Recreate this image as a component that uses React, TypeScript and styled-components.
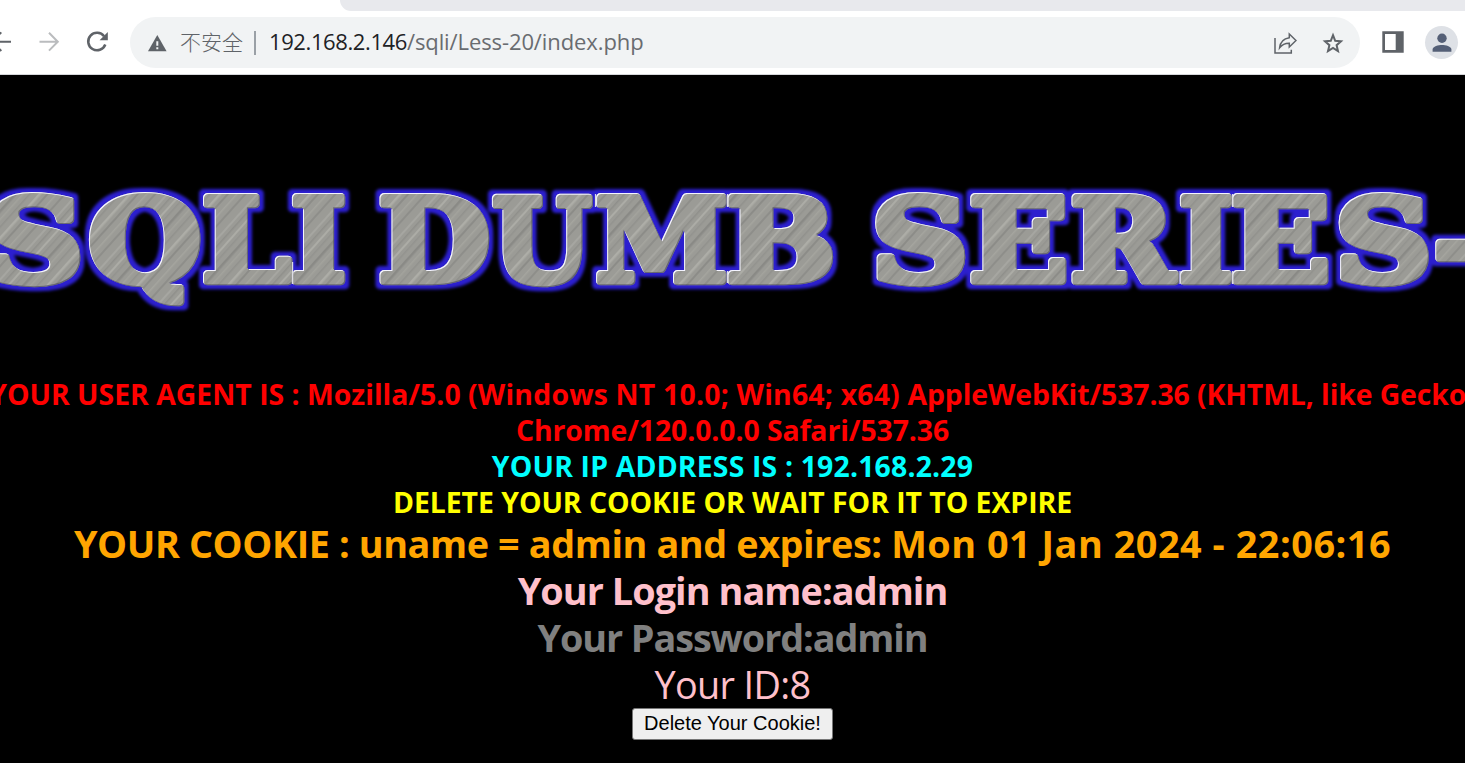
import React from 'react';
import styled, { createGlobalStyle } from 'styled-components';

const GlobalStyle = createGlobalStyle`
  html, body { margin: 0; height: 100%; background: #000; overflow: hidden; }
  *, *::before, *::after { box-sizing: border-box; }
`;

const Window = styled.div`
  display: flex;
  flex-direction: column;
  width: 1465px;
  height: 763px;
  overflow: hidden;
  background: #000;
`;

const TabStrip = styled.div`
  display: flex;
  justify-content: flex-end;
  flex: none;
  height: 11px;
  background: #fff;
`;

const InactiveTabs = styled.div`
  width: 1125px;
  height: 11px;
  background: #e8e9ed;
  border-bottom-left-radius: 11px;
`;

const Toolbar = styled.div`
  display: flex;
  align-items: flex-start;
  flex: none;
  height: 64px;
  padding-top: 6px;
  background: #fff;
  border-bottom: 1px solid #d5d7da;
`;

const NavButtons = styled.div`
  display: flex;
  align-items: center;
  gap: 26px;
  width: 130px;
  height: 51px;
  padding-bottom: 2px;
`;

const AddressBar = styled.div`
  display: flex;
  align-items: center;
  width: 1230px;
  height: 51px;
  padding: 0 15px 0 17px;
  border-radius: 26px;
  background: #f1f3f4;
  font-family: "Open Sans", "Noto Sans CJK SC", sans-serif;
  font-size: 22px;
  line-height: 30px;
  white-space: pre;
`;

const Security = styled.span`
  margin-left: 13px;
  padding-bottom: 3px;
  width: 65px;
  font-family: "Noto Sans CJK SC", sans-serif;
  font-weight: 300;
  font-size: 21px;
  color: #5f6368;
`;

const Divider = styled.span`
  width: 2px;
  height: 24px;
  margin: 0 14px 0 9px;
  background: #9aa0a6;
`;

const Host = styled.span`
  padding-bottom: 3px;
  margin-left: -1px;
  color: #202124;
  letter-spacing: -0.4px;
`;

const Path = styled.span`
  flex: 1;
  padding-bottom: 3px;
  color: #696c70;
  letter-spacing: -0.1px;
`;

const AddressActions = styled.div`
  display: flex;
  gap: 24px;
`;

const WindowActions = styled.div`
  display: flex;
  align-items: center;
  height: 51px;
  gap: 21px;
  padding-left: 22px;
`;

const Avatar = styled.div`
  display: flex;
  align-items: center;
  justify-content: center;
  width: 33px;
  height: 33px;
  border-radius: 50%;
  background: #dee1e6;
`;

const Banner = styled.svg`
  display: block;
  flex: none;
  width: 1465px;
  height: 301px;
`;

const Content = styled.main`
  display: flex;
  flex-direction: column;
  align-items: center;
  font-family: "Open Sans", sans-serif;
`;

const Line = styled.div<{ $color: string; $large?: boolean; $regular?: boolean; $spacing?: number }>`
  color: ${p => p.$color};
  font-size: ${p => (p.$large ? 37.8 : 28.4)}px;
  line-height: ${p => (p.$large ? 47 : 36)}px;
  font-weight: ${p => (p.$regular ? 400 : 700)};
  letter-spacing: ${p => p.$spacing ?? 0}px;
  white-space: pre;
`;

const Spaced = styled.span<{ $by: number }>`
  letter-spacing: ${p => p.$by}px;
`;

const DeleteButton = styled.button`
  width: 201px;
  height: 32px;
  padding: 0 0 2px;
  border: 1px solid #767676;
  border-radius: 3px;
  background: #efefef;
  color: #000;
  font: 20px "Liberation Sans", Arial, sans-serif;
`;

/* Horizontal ink bounds and advance of each bold glyph, in thousandths of an em. */
const GLYPHS: Record<string, [number, number, number]> = {
  S: [63, 672, 722], Q: [31, 828, 871], L: [47, 688, 703], I: [47, 422, 468],
  D: [47, 828, 867], U: [31, 859, 872], M: [31, 1063, 1107], B: [47, 797, 845],
  E: [47, 719, 762], R: [47, 844, 831], '-': [47, 375, 415],
};

const WORDS: [string, number, number][][] = [
  [['S', -10, 81], ['Q', 88, 200], ['L', 203.5, 293], ['I', 292, 345]],
  [['D', 380, 489], ['U', 491.5, 594], ['M', 595, 727], ['B', 728, 833.5]],
  [['S', 875.5, 966], ['E', 971, 1067], ['R', 1072, 1180], ['I', 1180, 1232], ['E', 1233, 1329], ['S', 1339, 1429.5], ['-', 1434.5, 1482]],
];

const EM = 114.5;
const STROKE = 8.5;

function Letter({ glyph, left, right }: { glyph: string; left: number; right: number }) {
  const [inkLeft, inkRight, advance] = GLYPHS[glyph];
  const scale = (right - left - STROKE) / (((inkRight - inkLeft) * EM) / 1000);
  return (
    <tspan
      x={left + STROKE / 2 - (inkLeft * EM * scale) / 1000}
      textLength={(advance * EM * scale) / 1000}
      lengthAdjust="spacingAndGlyphs"
    >
      {glyph}
    </tspan>
  );
}

const SEAMS: [number, number, number][] = [
  [292.5, 187, 209], [595.5, 119, 132], [727.5, 119, 132], [727.5, 196, 208], [1180, 196, 209], [1232.5, 119, 132], [1232.5, 196, 209],
];

const STREAKS: [number, string, number][] = [
  [2, '#a6a6a1', 2], [7, '#8f8f8b', 1.5], [12, '#acaca6', 2], [17, '#93938f', 1.5], [23, '#8a8a86', 2.5],
  [29, '#a3a39d', 1.5], [34, '#91918d', 1.5], [41, '#adada7', 2.5], [47, '#8c8c88', 2], [54, '#a5a59f', 1.5], [60, '#8e8e8a', 2],
];

function TitleBanner() {
  return (
    <Banner viewBox="0 0 1465 301">
      <defs>
        <pattern id="metal" width="67" height="67" patternUnits="userSpaceOnUse" patternTransform="rotate(42)">
          <rect width="67" height="67" fill="#9b9b96" />
          {STREAKS.map(([x, color, w]) => <rect key={x} x={x} width={w} height="67" fill={color} />)}
        </pattern>
        <filter id="emboss" filterUnits="userSpaceOnUse" x="-20" y="90" width="1505" height="170" colorInterpolationFilters="sRGB">
          <feMorphology in="SourceAlpha" operator="dilate" radius="4" result="grown" />
          <feGaussianBlur in="grown" stdDeviation="1.7" result="soft" />
          <feFlood floodColor="#2c1fcf" result="blue" />
          <feComposite in="blue" in2="soft" operator="in" result="glow" />
          <feOffset in="SourceAlpha" dx="1.4" dy="1.4" result="lower" />
          <feFlood floodColor="#f4f4ff" />
          <feComposite in2="SourceAlpha" operator="in" result="white" />
          <feComposite in="white" in2="lower" operator="out" result="shine" />
          <feOffset in="SourceAlpha" dx="-1" dy="-1" result="upper" />
          <feFlood floodColor="#44445a" floodOpacity="0.6" />
          <feComposite in2="SourceAlpha" operator="in" result="dark" />
          <feComposite in="dark" in2="upper" operator="out" result="shade" />
          <feMerge>
            <feMergeNode in="glow" />
            <feMergeNode in="SourceGraphic" />
            <feMergeNode in="shade" />
            <feMergeNode in="shine" />
          </feMerge>
        </filter>
      </defs>
      <g filter="url(#emboss)" fill="url(#metal)" stroke="url(#metal)" strokeWidth={STROKE} strokeLinejoin="round"
        fontFamily="DejaVu Serif, serif" fontWeight="700" fontSize={EM}>
        {WORDS.map((word, i) => (
          <text key={i} y="206">
            {word.map(([glyph, left, right], k) => <Letter key={k} glyph={glyph} left={left} right={right} />)}
          </text>
        ))}
      </g>
      {SEAMS.map(([x, top, bottom]) => (
        <rect key={`${x}-${top}`} x={x - 0.6} y={top} width="1.3" height={bottom - top} fill="#dcdce4" />
      ))}
    </Banner>
  );
}

function BackIcon() {
  return (
    <svg width="12" height="22" viewBox="0 0 12 22" fill="none" stroke="#5f6368" strokeWidth="2">
      <path d="M11 10.7H-8M1.3 1.4L-8 10.7L1.3 20" />
    </svg>
  );
}

function ForwardIcon() {
  return (
    <svg width="22" height="22" viewBox="0 0 22 22" fill="none" stroke="#babcbe" strokeWidth="2">
      <path d="M1.5 10.7H19.5M11 1.8L19.8 10.7L11 19.6" />
    </svg>
  );
}

function ReloadIcon() {
  return (
    <svg width="23" height="22" viewBox="0 0 23 22">
      <path d="M18.1 5.2A8.8 8.8 0 1 0 19.3 13.5" fill="none" stroke="#5f6368" strokeWidth="2.5" />
      <path d="M21.8 1V9.2H13.6Z" fill="#5f6368" />
    </svg>
  );
}

function WarningIcon() {
  return (
    <svg width="20" height="18" viewBox="0 0 20 18">
      <path d="M10.3 1L19.6 17.3H1Z" fill="#5f6368" />
      <path d="M9.3 7.2H11.3V11.7H9.3ZM9.3 13.2H11.3V15.2H9.3Z" fill="#f1f3f4" />
    </svg>
  );
}

function ShareIcon() {
  return (
    <svg width="24" height="24" viewBox="0 0 24 24" fill="none" stroke="#5f6368" strokeWidth="1.5">
      <path d="M2 7V22.1H18.3V18.8" />
      <path d="M16.3 3L23 9.5L16.3 16V12.2C12 12.1 8.9 13.8 6.6 16.9C7.2 11.5 10.3 7.5 16.3 6.7Z" />
    </svg>
  );
}

function StarIcon() {
  return (
    <svg width="24" height="24" viewBox="0 0 24 24" fill="none" stroke="#5f6368" strokeWidth="2">
      <path d="M12 4.2L14.2 9.8L20 10.3L15.6 14.2L17 20.2L12 17L7 20.2L8.4 14.2L4 10.3L9.8 9.8Z" />
    </svg>
  );
}

function PanelIcon() {
  return (
    <svg width="22" height="23" viewBox="0 0 22 23">
      <path fillRule="evenodd" d="M0.3 0.2H21.7V21.8H0.3ZM3 3V19H13.7V3Z" fill="#5f6368" />
    </svg>
  );
}

function PersonIcon() {
  return (
    <svg width="20" height="20" viewBox="0 0 20 20" fill="#545f76">
      <circle cx="10" cy="5.3" r="4.7" />
      <path d="M0.6 18.8V16.4C0.6 13.4 6.5 12 10 12S19.4 13.4 19.4 16.4V18.8Z" />
    </svg>
  );
}

export default function App() {
  return (
    <Window>
      <GlobalStyle />
      <TabStrip><InactiveTabs /></TabStrip>
      <Toolbar>
        <NavButtons>
          <BackIcon />
          <ForwardIcon />
          <ReloadIcon />
        </NavButtons>
        <AddressBar>
          <WarningIcon />
          <Security>不安全</Security>
          <Divider />
          <Host>192.168.2.146</Host>
          <Path>/sqli/Less-20/index.php</Path>
          <AddressActions>
            <ShareIcon />
            <StarIcon />
          </AddressActions>
        </AddressBar>
        <WindowActions>
          <PanelIcon />
          <Avatar><PersonIcon /></Avatar>
        </WindowActions>
      </Toolbar>
      <TitleBanner />
      <Content>
        <Line $color="#f00">
          <Spaced $by={0}>{'YOUR USER AGENT IS : Mozilla/5.0 '}</Spaced>
          <Spaced $by={0.2}>{'(Windows NT 10.0; Win64; x64) '}</Spaced>
          <Spaced $by={-0.1}>AppleWebKit/537.36 (KHTML, like Gecko)</Spaced>
        </Line>
        <Line $color="#f00" $spacing={-0.1}>Chrome/120.0.0.0 Safari/537.36</Line>
        <Line $color="#0ff" $spacing={0.17}>YOUR IP ADDRESS IS : 192.168.2.29</Line>
        <Line $color="#ff0" $spacing={-0.04}>DELETE YOUR COOKIE OR WAIT FOR IT TO EXPIRE</Line>
        <Line $color="#ffa500" $large>
          <Spaced $by={-0.4}>{'YOUR COOKIE : uname = admin and expires: '}</Spaced>
          <Spaced $by={0.53}>Mon 01 Jan 2024 - 22:06:16</Spaced>
        </Line>
        <Line $color="#ffc0cb" $large $spacing={-0.93}>Your Login name:admin</Line>
        <Line $color="#808080" $large $spacing={-1.1}>Your Password:admin</Line>
        <Line $color="#ffc0cb" $large $regular $spacing={-0.65}>Your ID:8</Line>
        <DeleteButton type="button">Delete Your Cookie!</DeleteButton>
      </Content>
    </Window>
  );
}
